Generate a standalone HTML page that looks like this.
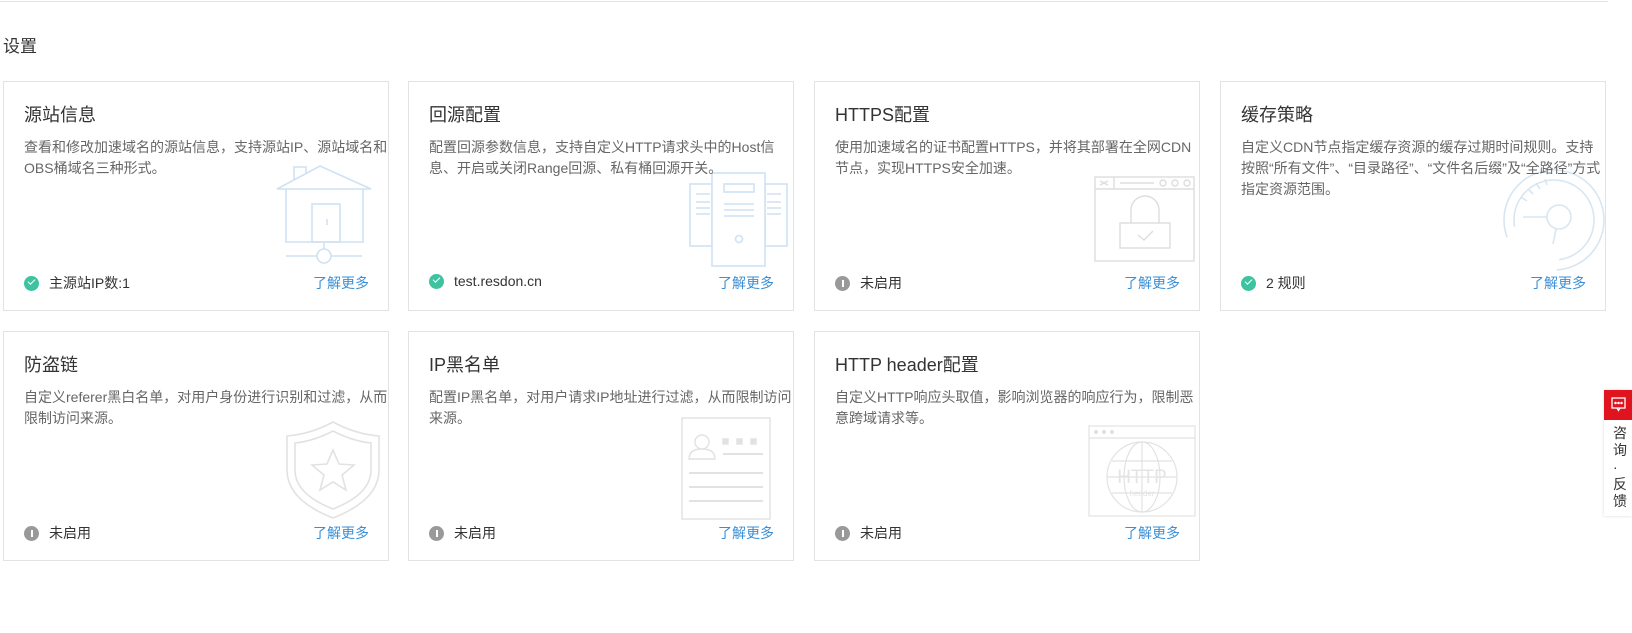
<!DOCTYPE html>
<html><head><meta charset="utf-8"><style>
*{margin:0;padding:0;box-sizing:border-box}
body{width:1632px;height:633px;background:#fff;font-family:"Liberation Sans","Noto Sans CJK SC",sans-serif;color:#333;position:relative;overflow:hidden}
.topline{position:absolute;left:0;top:1px;width:1608px;height:1px;background:#e3e3e3}
.h{position:absolute;left:3px;top:32px;font-size:17px;color:#333}
.card{position:absolute;width:386px;height:230px;border:1px solid #e3e3e3;background:#fff}
.t{position:absolute;left:20px;top:19px;font-size:18px;color:#333}
.d{position:absolute;left:20px;top:55px;width:364px;font-size:14px;line-height:21px;color:#666;z-index:2}
.s{position:absolute;left:20px;top:191px;font-size:14px;color:#333;display:flex;align-items:center}
.ic{width:15px;height:15px;border-radius:50%;margin-right:10px;position:relative}
.ok{background:#3ec3a0}
.ok:after{content:"";position:absolute;left:4px;top:3px;width:6px;height:3px;border-left:1.6px solid #fff;border-bottom:1.6px solid #fff;transform:rotate(-45deg)}
.off{background:#999}
.off:after{content:"";position:absolute;left:6.5px;top:4px;width:2px;height:7px;background:#fff}
.m{position:absolute;left:309px;top:191px;font-size:14px;color:#3b8fd6}
svg{position:absolute}
.side{position:absolute;left:1604px;top:390px;width:28px;height:126px;background:#fff;box-shadow:0 0 3px rgba(0,0,0,.15)}
.side .r{height:30px;background:#e0141e;position:relative}
.side .v{font-size:14px;line-height:17px;width:14px;margin:5px auto 0 9px;color:#333}
</style></head><body>
<div class="topline"></div>
<div class="h">设置</div>

<div class="card" style="left:3px;top:81px">
<svg style="left:270px;top:82px" width="100" height="110" viewBox="0 0 100 110" fill="none" stroke="#cfe2f3" stroke-width="1.6"><path d="M3 25 L46 2 L97 25 Z"/><path d="M20 15 V3 H32 V9"/><path d="M12 25 V78 H89 V25"/><rect x="38" y="40" width="28" height="38"/><path d="M53 55 v6"/><path d="M50 78 v7"/><circle cx="50" cy="92" r="7"/><path d="M12 92 H43 M57 92 H88"/></svg>
<div class="t">源站信息</div>
<div class="d">查看和修改加速域名的源站信息，支持源站IP、源站域名和OBS桶域名三种形式。</div>
<div class="s"><span class="ic ok"></span>主源站IP数:1</div>
<div class="m">了解更多</div>
</div>

<div class="card" style="left:408px;top:81px">
<svg style="left:280px;top:90px" width="100" height="96" viewBox="0 0 100 96" fill="none" stroke="#cfe2f3" stroke-width="1.6"><rect x="1" y="12" width="22" height="62"/><rect x="76" y="12" width="22" height="62"/><path d="M7 22h14M7 30h14M7 36h14M7 42h14M78 22h14M78 30h14M78 36h14M78 42h14"/><rect x="23" y="1" width="53" height="93" fill="#fff"/><rect x="35" y="12" width="30" height="8"/><path d="M35 32h30M35 38h30M35 44h30"/><circle cx="50" cy="67" r="3.5"/></svg>
<div class="t">回源配置</div>
<div class="d">配置回源参数信息，支持自定义HTTP请求头中的Host信息、开启或关闭Range回源、私有桶回源开关。</div>
<div class="s"><span class="ic ok"></span>test.resdon.cn</div>
<div class="m">了解更多</div>
</div>

<div class="card" style="left:814px;top:81px">
<svg style="left:279px;top:94px" width="102" height="88" viewBox="0 0 102 88" fill="none" stroke="#ddd" stroke-width="1.4"><rect x="1" y="1" width="99" height="84"/><path d="M1 13 H100 M20 1 V13 M26 7 H60 M6 5 l8 4 M6 9 l8-4"/><circle cx="69" cy="7" r="3"/><circle cx="81" cy="7" r="3"/><circle cx="93" cy="7" r="3"/><rect x="26" y="47" width="50" height="25"/><path d="M37 47 V34 a14 14 0 0 1 28 0 V47"/><path d="M44 59 l6 5 l9 -9"/></svg>
<div class="t">HTTPS配置</div>
<div class="d">使用加速域名的证书配置HTTPS，并将其部署在全网CDN节点，实现HTTPS安全加速。</div>
<div class="s"><span class="ic off"></span>未启用</div>
<div class="m">了解更多</div>
</div>

<div class="card" style="left:1220px;top:81px;overflow:hidden">
<svg style="left:280px;top:80px" width="105" height="110" viewBox="0 0 105 110" fill="none" stroke="#d8e6f1" stroke-width="1.6"><circle cx="53" cy="58" r="50" stroke-dasharray="250 64" transform="rotate(-200 53 58)"/><circle cx="53" cy="58" r="40" stroke-dasharray="190 62" transform="rotate(-190 53 58)"/><circle cx="58" cy="55" r="12"/><path d="M46 55 H22 M55 67 L52 82 M20 35 l6 4 M27 27 l5 5 M35 21 l4 6 M44 17 l2 6"/></svg>
<div class="t">缓存策略</div>
<div class="d">自定义CDN节点指定缓存资源的缓存过期时间规则。支持按照“所有文件”、“目录路径”、“文件名后缀”及“全路径”方式指定资源范围。</div>
<div class="s"><span class="ic ok"></span>2 规则</div>
<div class="m">了解更多</div>
</div>

<div class="card" style="left:3px;top:331px">
<svg style="left:281px;top:88px" width="96" height="100" viewBox="0 0 96 100" fill="none" stroke="#e2e2e2" stroke-width="1.6"><path d="M48 2 Q70 14 94 16 V50 Q94 80 48 98 Q2 80 2 50 V16 Q26 14 48 2 Z"/><path d="M48 11 Q67 21 86 23 V50 Q86 74 48 89 Q10 74 10 50 V23 Q29 21 48 11 Z"/><path d="M48 30 L54 44 L69 45 L57 55 L61 70 L48 62 L35 70 L39 55 L27 45 L42 44 Z"/></svg>
<div class="t">防盗链</div>
<div class="d">自定义referer黑白名单，对用户身份进行识别和过滤，从而限制访问来源。</div>
<div class="s"><span class="ic off"></span>未启用</div>
<div class="m">了解更多</div>
</div>

<div class="card" style="left:408px;top:331px">
<svg style="left:272px;top:85px" width="90" height="103" viewBox="0 0 90 103" fill="none" stroke="#e2e2e2" stroke-width="1.4"><rect x="1" y="1" width="88" height="101"/><circle cx="21" cy="25" r="7"/><path d="M8 42 Q8 32 21 32 Q34 32 34 42 Z"/><rect x="42" y="22" width="5" height="5" fill="#e2e2e2"/><rect x="56" y="22" width="5" height="5" fill="#e2e2e2"/><rect x="70" y="22" width="5" height="5" fill="#e2e2e2"/><path d="M42 37 H82 M8 56 H82 M8 70 H82 M8 84 H82" stroke-width="2"/></svg>
<div class="t">IP黑名单</div>
<div class="d">配置IP黑名单，对用户请求IP地址进行过滤，从而限制访问来源。</div>
<div class="s"><span class="ic off"></span>未启用</div>
<div class="m">了解更多</div>
</div>

<div class="card" style="left:814px;top:331px">
<svg style="left:273px;top:93px" width="108" height="93" viewBox="0 0 108 93" fill="none" stroke="#e2e2e2" stroke-width="1.2"><rect x="1" y="1" width="106" height="90"/><path d="M1 13 H107"/><circle cx="8" cy="7" r="1.5" fill="#ddd"/><circle cx="16" cy="7" r="1.5" fill="#ddd"/><circle cx="24" cy="7" r="1.5" fill="#ddd"/><circle cx="54" cy="52" r="35"/><ellipse cx="54" cy="52" rx="18" ry="35"/><path d="M54 17 V87 M19 52 H89 M24 36 H84 M24 68 H84"/><text x="54" y="58" font-family="Liberation Sans,sans-serif" font-size="19" fill="#e4e4e4" stroke="none" text-anchor="middle">HTTP</text><text x="54" y="71" font-family="Liberation Sans,sans-serif" font-size="8" fill="#e4e4e4" stroke="none" text-anchor="middle">header</text></svg>
<div class="t">HTTP header配置</div>
<div class="d">自定义HTTP响应头取值，影响浏览器的响应行为，限制恶意跨域请求等。</div>
<div class="s"><span class="ic off"></span>未启用</div>
<div class="m">了解更多</div>
</div>

<div class="side"><div class="r"><svg style="left:7px;top:7px" width="15" height="15" viewBox="0 0 15 15" fill="none" stroke="#fff" stroke-width="1.3"><rect x="1" y="1" width="13" height="10"/><path d="M6 11 L7.5 13.5 L9 11"/><circle cx="4.5" cy="6" r=".6" fill="#fff"/><circle cx="7.5" cy="6" r=".6" fill="#fff"/><circle cx="10.5" cy="6" r=".6" fill="#fff"/></svg></div>
<div class="v">咨询·反馈</div></div>
</body></html>
